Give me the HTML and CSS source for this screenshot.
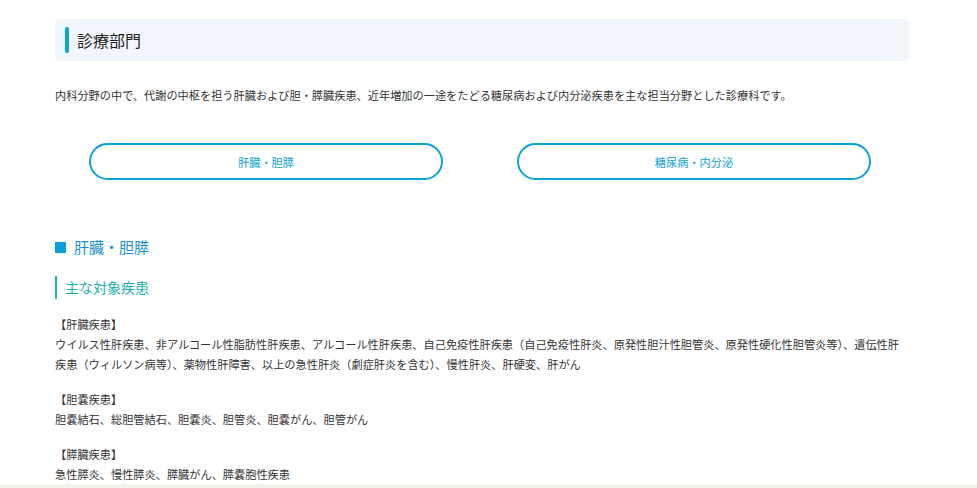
FILE: index.html
```html
<!DOCTYPE html>
<html lang="ja">
<head>
    <meta charset="UTF-8">
    <meta name="viewport" content="width=device-width, initial-scale=1.0">
    <title>診療部門</title>
    <link rel="stylesheet" href="styles.css">
</head>
<body>
    <div class="page">
        <h2 class="dept-title">診療部門</h2>

        <p class="lead">内科分野の中で、代謝の中枢を担う肝臓および胆・膵臓疾患、近年増加の一途をたどる糖尿病および内分泌疾患を主な担当分野とした診療科です。</p>

        <div class="links">
            <a class="link-btn" href="#liver">肝臓・胆膵</a>
            <a class="link-btn" href="#diabetes">糖尿病・内分泌</a>
        </div>

        <h3 class="field-title" id="liver">肝臓・胆膵</h3>
        <h4 class="sub-title">主な対象疾患</h4>

        <div class="disease">
            <p class="disease-name">【肝臓疾患】</p>
            <p>ウイルス性肝疾患、非アルコール性脂肪性肝疾患、アルコール性肝疾患、自己免疫性肝疾患（自己免疫性肝炎、原発性胆汁性胆管炎、原発性硬化性胆管炎等）、遺伝性肝疾患（ウィルソン病等）、薬物性肝障害、以上の急性肝炎（劇症肝炎を含む）、慢性肝炎、肝硬変、肝がん</p>
        </div>
        <div class="disease">
            <p class="disease-name">【胆嚢疾患】</p>
            <p>胆嚢結石、総胆管結石、胆嚢炎、胆管炎、胆嚢がん、胆管がん</p>
        </div>
        <div class="disease">
            <p class="disease-name">【膵臓疾患】</p>
            <p>急性膵炎、慢性膵炎、膵臓がん、膵嚢胞性疾患</p>
        </div>
    </div>
    <div class="footer-band"></div>
</body>
</html>
```

FILE: styles.css
```css
body {
    font-family: "Noto Sans CJK JP", "Noto Sans", sans-serif;
    background-color: #fff;
    color: #333;
    margin: 0;
    height: 488px;
    overflow: hidden;
    position: relative;
}
p {
    margin: 0;
}
.page {
    width: 854px;
    margin: 0 0 0 55px;
    padding-top: 19px;
}
.dept-title {
    margin: 0;
    height: 42px;
    display: flex;
    align-items: center;
    gap: 8px;
    padding-left: 10px;
    background-color: #f1f6fd;
    border-radius: 4px;
    font-size: 16px;
    font-weight: normal;
    color: #222;
}
.dept-title::before {
    content: "";
    width: 4px;
    height: 26px;
    border-radius: 2px;
    background-color: #0aa3dc;
}
.lead {
    margin-top: 24px;
    font-size: 11.2px;
    line-height: 20px;
}
.links {
    display: grid;
    grid-template-columns: 1fr 1fr;
    gap: 74px;
    padding: 0 38px 0 34px;
    margin-top: 38px;
}
.link-btn {
    height: 37px;
    box-sizing: border-box;
    border: 2px solid #0aa3dc;
    border-radius: 19px;
    display: flex;
    align-items: center;
    justify-content: center;
    color: #0a9fd8;
    font-size: 11.2px;
    text-decoration: none;
}
.field-title {
    margin: 56px 0 0;
    display: flex;
    align-items: center;
    gap: 8px;
    font-size: 15px;
    font-weight: normal;
    color: #1a8fd0;
    line-height: 22px;
}
.field-title::before {
    content: "";
    width: 11px;
    height: 11px;
    background-color: #0a9fd8;
}
.sub-title {
    margin: 18px 0 0;
    display: flex;
    align-items: center;
    gap: 8px;
    font-size: 14px;
    font-weight: normal;
    color: #19b0a5;
    line-height: 23px;
}
.sub-title::before {
    content: "";
    width: 2px;
    height: 23px;
    background-color: #19b5a5;
}
.disease {
    font-size: 11.2px;
    line-height: 20px;
    margin-top: 15px;
}
.disease:first-of-type {
    margin-top: 17px;
}
.footer-band {
    position: absolute;
    left: 0;
    right: 0;
    bottom: 0;
    height: 4px;
    background-color: #f2f4ec;
}
```
